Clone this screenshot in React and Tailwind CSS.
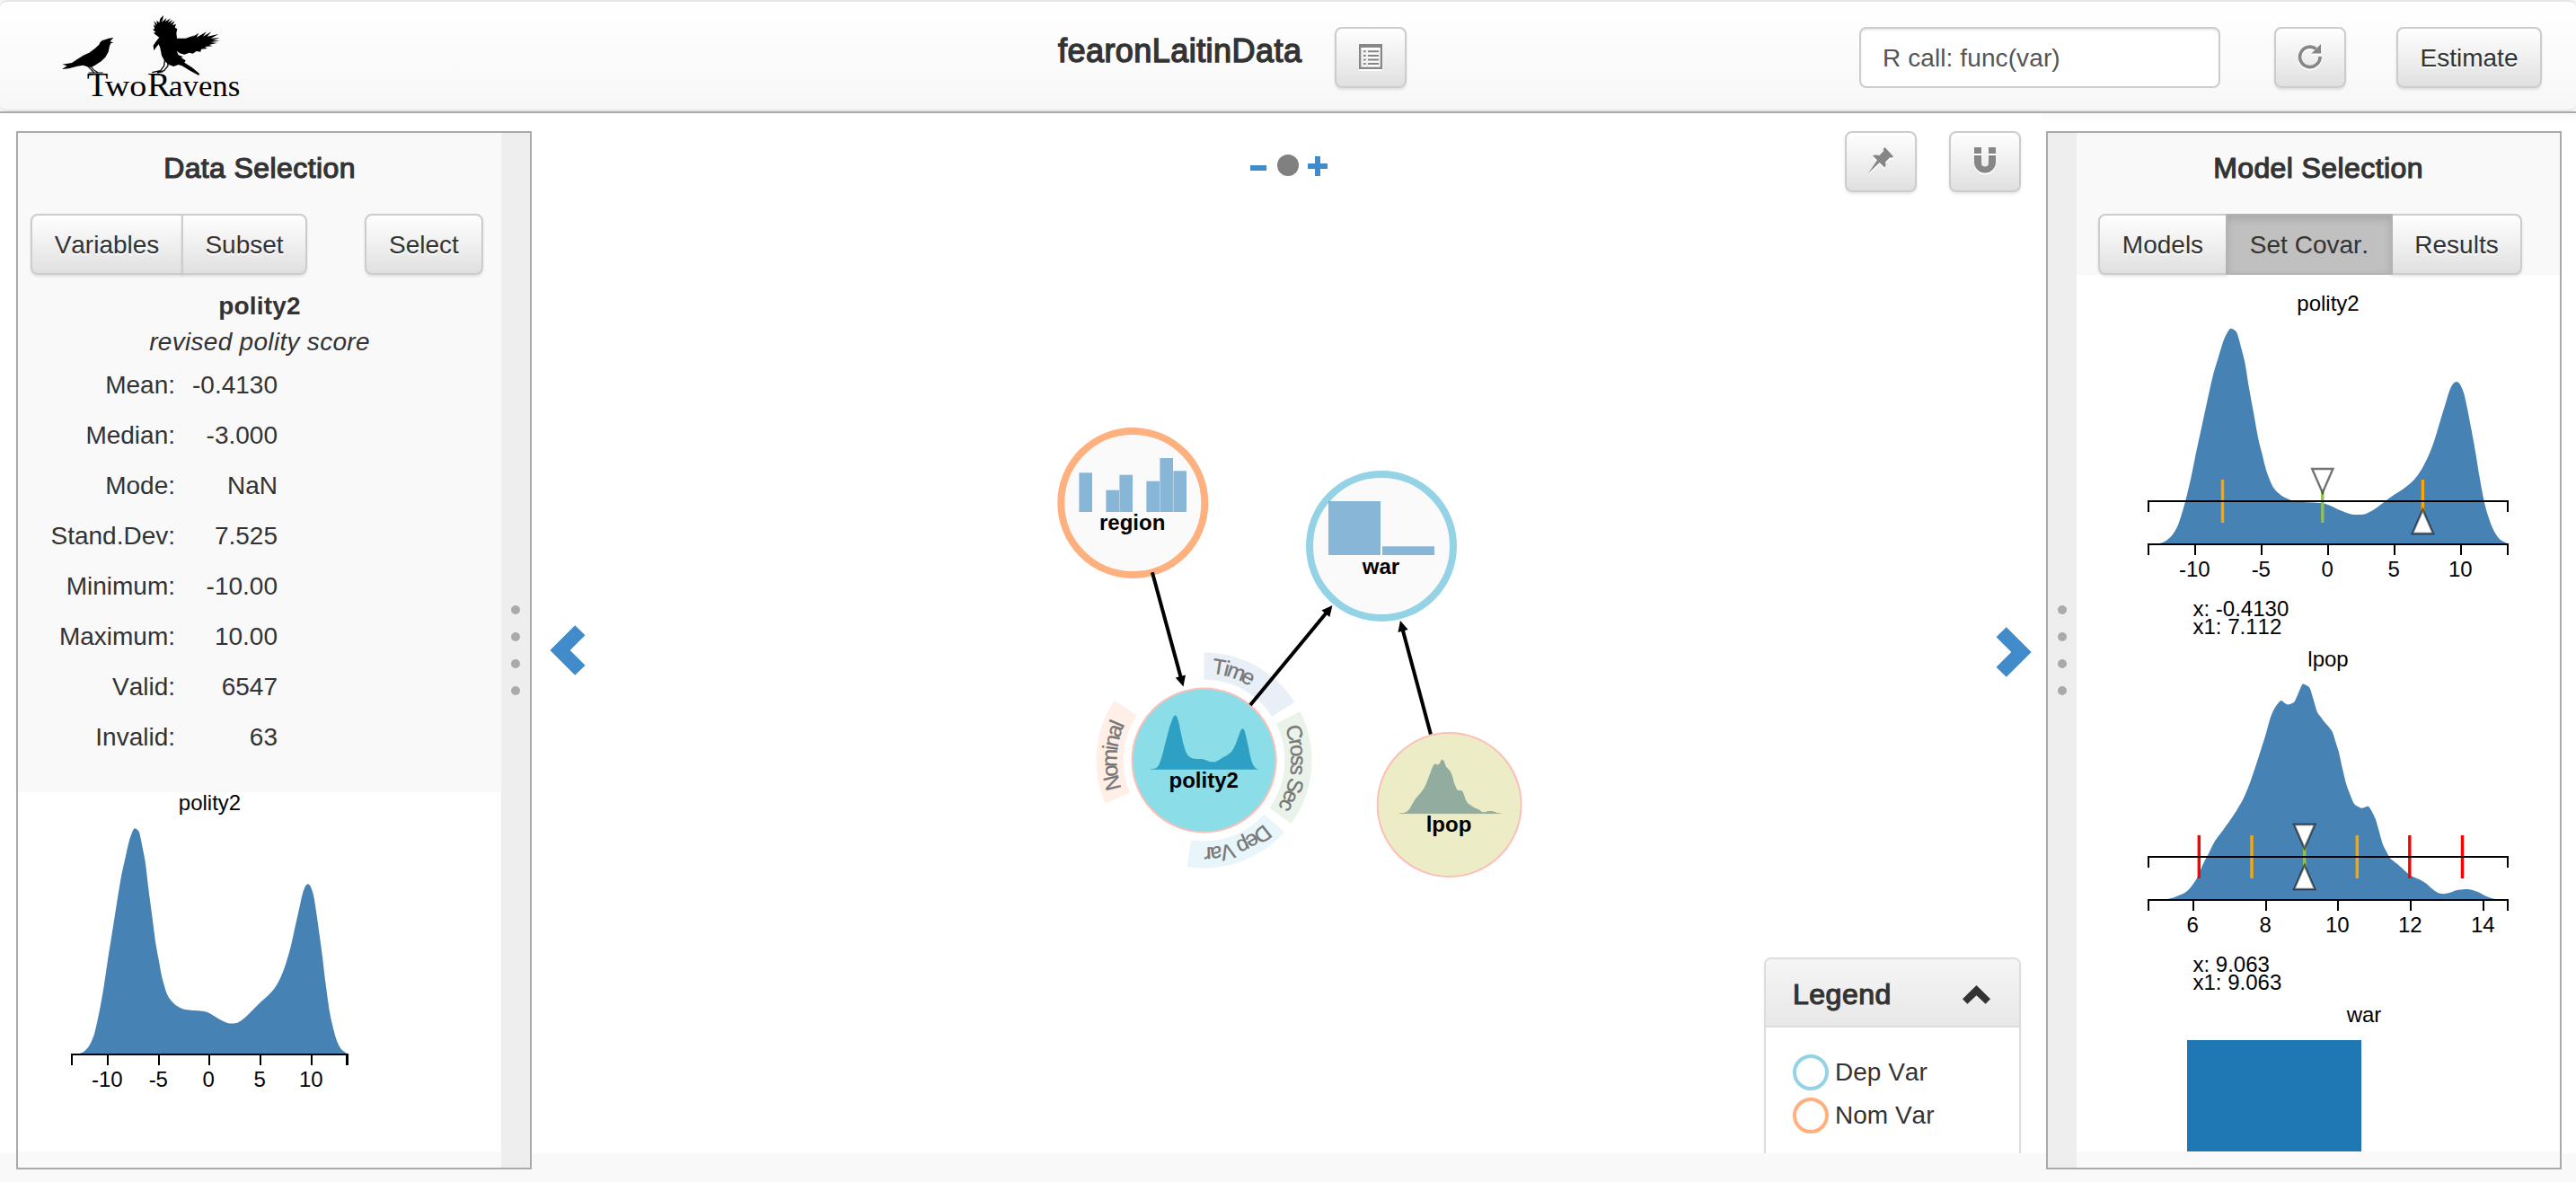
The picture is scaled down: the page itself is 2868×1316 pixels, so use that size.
import React from "react";

/* ---------- density data: [value, height relative to the peak] ---------- */

const fromSamples = (pts, zero, unit, base, height) =>
  pts.map(([x, y]) => [(x - zero) / unit, (base - y) / height]);

const POLITY = fromSamples(
  [
    [190, 938], [208, 937], [222, 930], [237, 908], [250, 868], [263, 795], [275, 710], [285, 625], [297, 530],
    [307, 450], [320, 350], [332, 280], [341, 230], [348, 203], [355, 186], [363, 190], [369, 202], [377, 250],
    [385, 305], [393, 390], [402, 475], [412, 570], [420, 625], [429, 685], [443, 742], [459, 769], [475, 783],
    [490, 790], [510, 793], [530, 794], [545, 797], [560, 806], [580, 822], [600, 834], [612, 836], [628, 834],
    [645, 820], [663, 798], [685, 770], [708, 744], [727, 717], [743, 680], [757, 633], [770, 575], [783, 500],
    [792, 450], [800, 405], [807, 380], [814, 371], [821, 378], [829, 408], [836, 460], [845, 540], [853, 615],
    [861, 700], [873, 805], [888, 883], [902, 921], [918, 937],
  ],
  553.5, 27, 938, 752
);

const LPOP = fromSamples(
  [
    [362, 767], [410, 766], [435, 760], [455, 752], [468, 744], [480, 732], [492, 715], [503, 695], [515, 665],
    [530, 637], [547, 603], [570, 572], [592, 541], [612, 510], [630, 478], [650, 428], [670, 368], [692, 298],
    [703, 258], [714, 230], [725, 213], [735, 204], [744, 210], [754, 215], [764, 212], [773, 206], [784, 182],
    [795, 158], [805, 160], [816, 169], [826, 200], [837, 236], [847, 250], [858, 265], [879, 291], [888, 318],
    [898, 350], [908, 395], [919, 440], [930, 470], [940, 494], [951, 503], [962, 508], [972, 506], [981, 503],
    [990, 515], [1002, 540], [1012, 575], [1022, 610], [1033, 632], [1043, 650], [1065, 668], [1085, 686],
    [1103, 700], [1125, 710], [1145, 722], [1163, 738], [1178, 748], [1192, 751], [1210, 748], [1230, 741],
    [1255, 738], [1275, 740], [1295, 747], [1315, 758], [1340, 766], [1373, 767],
  ],
  -127.4, 102.4, 767, 609
);

function densityPath(data, zero, unit, base, height) {
  const p = data.map(([v, h]) => [zero + v * unit, base - h * height]);
  const f = (n) => n.toFixed(2);
  let d = `M${f(p[0][0])},${f(base)}L${f(p[0][0])},${f(p[0][1])}`;
  for (let i = 0; i < p.length - 1; i++) {
    const a = p[i - 1] || p[i];
    const b = p[i];
    const c = p[i + 1];
    const e = p[i + 2] || c;
    const k = 1 / 7;
    d += `C${f(b[0] + (c[0] - a[0]) * k)},${f(b[1] + (c[1] - a[1]) * k)} ${f(c[0] - (e[0] - b[0]) * k)},${f(
      c[1] - (e[1] - b[1]) * k
    )} ${f(c[0])},${f(c[1])}`;
  }
  return d + `L${f(p[p.length - 1][0])},${f(base)}Z`;
}

/* ---------- shared controls ---------- */

const BTN =
  "flex h-[68px] items-center justify-center border-2 border-[#ccc] bg-gradient-to-b from-white to-[#e0e0e0] pt-px text-[28px] leading-10 text-[#333] [text-shadow:0_2px_0_#fff] shadow-[0_2px_3px_rgba(0,0,0,0.1)]";

const ICON = "[filter:drop-shadow(0_2px_0_#fff)]";

function Dots() {
  return (
    <div className="flex w-8 shrink-0 flex-col items-center justify-center gap-[20px] bg-[#eee]">
      {[0, 1, 2, 3].map((i) => (
        <span key={i} className="h-[10px] w-[10px] rounded-full bg-[#aaa]" />
      ))}
    </div>
  );
}

function Logo() {
  return (
    <svg className="ml-[60px] mt-[8px] h-[105px] w-[220px] shrink-0" viewBox="0 0 660 315">
      <path d="M199 96L183 98L170 103C160 104 154 110 151 119L138 131L118 146L98 155L78 168L60 180L28 185L44 190L27 201L50 199L78 191L98 188L112 193L124 195L136 189L158 175L172 161L182 143L186 124L190 115L199 112L187 109Z" />
      <g stroke="#000" fill="none">
        <path d="M122 190L132 203L148 213M112 190L124 202L134 213M116 213L164 213" strokeWidth="3.5" />
        <path d="M380 176L381 190L368 206L345 213M370 172L368 190L356 206L328 212M345 213L365 209" strokeWidth="4" />
      </g>
      <path d="M334 139L332 122L342 107L352 95L340 86L333 80L340 77L330 68L337 66L332 52L340 58L334 40L345 52L343 38L352 46L355 32L366 21L364 34L360 44L376 30L372 42L390 31L380 46L397 36L388 50L404 40L396 55L408 50L404 62L412 66L409 80L411 98L440 98L470 88L458 97L484 80L476 95L510 76L498 92L526 76L512 92L550 84L524 98L554 97L530 105L554 105L524 112L546 113L518 120L530 124L504 126L512 132L492 134L490 143L476 141L464 149L452 146L436 152L420 148L410 140L416 154L432 160L424 162L440 172L436 179L462 196L486 216L484 222L455 206L428 190L416 186L400 192L384 186L370 174L360 156L355 130L350 118L343 126Z" />
      <text y="291" fontFamily="'Liberation Serif', serif" fill="#000">
        <tspan x="110" fontSize="116">T</tspan>
        <tspan x="170" fontSize="100" textLength="140" lengthAdjust="spacingAndGlyphs">wo</tspan>
        <tspan x="312" fontSize="116">R</tspan>
        <tspan x="384" fontSize="100" textLength="238" lengthAdjust="spacingAndGlyphs">avens</tspan>
      </text>
    </svg>
  );
}

function Header() {
  return (
    <header className="h-[126px] border-b-2 border-[#aaa] bg-[#f4f4f4]">
      <div className="flex h-[124px] items-start rounded-lg border-y-2 border-[#e6e6e6] bg-gradient-to-b from-white to-[#f7f7f7]">
        <Logo />
        <h1 className="ml-[898px] mt-[35px] w-[308px] whitespace-nowrap text-[36px] leading-10 tracking-[0.45px] text-[#333] [-webkit-text-stroke:1.4px_#333]">
          fearonLaitinData
        </h1>
        <button className={`${BTN} mt-7 w-20 rounded-lg`}>
          <svg className={`${ICON} -mt-1 h-7 w-[26px]`} viewBox="0 0 26 28" fill="#868686">
            <path fillRule="evenodd" d="M0 0H26V28H0ZM2.3 4V25.7H23.8V4Z" />
            <path d="M5 7.3h2.7v2H5zM5 12h2.7v2H5zM5 16.5h2.7v2H5zM5 21h2.7v2H5zM10 7.3h12v2H10zM10 12h12v2H10zM10 16.5h12v2H10zM10 21h12v2H10z" />
          </svg>
        </button>
        <div className="ml-[504px] mt-7 flex h-[68px] w-[402px] items-center rounded-lg border-2 border-[#ccc] bg-white px-6 pt-px text-[28px] tracking-[0.1px] text-[#555] shadow-[inset_0_2px_2px_rgba(0,0,0,0.075)]">
          R call: func(var)
        </div>
        <button className={`${BTN} ml-[60px] mt-7 w-20 rounded-lg`}>
          <svg className={`${ICON} -mt-1 h-7 w-7`} viewBox="0 0 28 28">
            <path d="M25 14A11.2 11.2 0 1 1 20.5 5.4" fill="none" stroke="#868686" strokeWidth="3.6" />
            <path d="M26 0V10.5H15.5Z" fill="#868686" />
          </svg>
        </button>
        <button className={`${BTN} ml-14 mt-7 w-[162px] rounded-lg`}>Estimate</button>
      </div>
    </header>
  );
}

/* ---------- charts ---------- */

function Axis({ x1, x2, y, ticks = [] }) {
  return (
    <g>
      <path d={`M${x1},${y + 12}V${y}H${x2}V${y + 12}`} fill="none" stroke="#000" strokeWidth="2" />
      {ticks.map(([x, label]) => (
        <g key={label}>
          <path d={`M${x},${y}V${y + 12}`} stroke="#000" strokeWidth="2" />
          <text x={x - 0.7} y={y + 36} textAnchor="middle">{label}</text>
        </g>
      ))}
    </g>
  );
}

function Marker({ x, axis, up }) {
  const base = up ? axis + 36 : axis - 36;
  const tip = up ? axis + 9.5 : axis - 9.5;
  return (
    <path
      d={`M${x - 11.6},${base}H${x + 11.6}L${x},${tip}Z`}
      fill="#fff"
      stroke="#000"
      strokeOpacity="0.55"
      strokeWidth="2.4"
    />
  );
}

function CovariateChart({ name, data, zero, unit, ticks, marks, lower, upper, x, x1 }) {
  return (
    <svg
      className="h-[396px] w-[538px] shrink-0 overflow-visible font-['Liberation_Sans',sans-serif] text-[24px]"
      viewBox="2312 306 538 396"
    >
      <text x="2592" y="346" textAnchor="middle">{name}</text>
      <path d={densityPath(data, zero, unit, 605.5, 239.5)} fill="#4682b4" />
      {marks.map(([mx, color]) => (
        <path key={mx} d={`M${mx},534V582`} stroke={color} strokeWidth="3.4" />
      ))}
      <Axis x1={2392} x2={2792} y={606} ticks={ticks} />
      <Axis x1={2392} x2={2792} y={558} />
      <Marker x={upper} axis={558} />
      <Marker x={lower} axis={558} up />
      <text x="2441.5" y="686">{x}</text>
      <text x="2441.5" y="706">{x1}</text>
    </svg>
  );
}

/* ---------- left panel ---------- */

const STATS = [
  ["Mean:", "-0.4130"],
  ["Median:", "-3.000"],
  ["Mode:", "NaN"],
  ["Stand.Dev:", "7.525"],
  ["Minimum:", "-10.00"],
  ["Maximum:", "10.00"],
  ["Valid:", "6547"],
  ["Invalid:", "63"],
];

function PanelTitle({ children }) {
  return (
    <h2 className="mt-[19px] text-center text-[32px] leading-10 tracking-[0.4px] text-[#333] [-webkit-text-stroke:1.2px_#333]">
      {children}
    </h2>
  );
}

function LeftPanel() {
  return (
    <aside className="mt-5 ml-[18px] flex h-[1156px] w-[574px] shrink-0 border-2 border-[#aaa] bg-[#f9f9f9]">
      <div className="flex w-[538px] flex-col">
        <PanelTitle>Data Selection</PanelTitle>
        <div className="mt-[31px] flex pl-[14px]">
          <button className={`${BTN} w-[170px] rounded-l-lg`}>Variables</button>
          <button className={`${BTN} -ml-0.5 w-[140px] rounded-r-lg`}>Subset</button>
          <button className={`${BTN} ml-16 w-[132px] rounded-lg`}>Select</button>
        </div>
        <div className="mt-[15px] text-center text-[28px] leading-10 text-[#333]">
          <div className="font-bold tracking-[0.2px]">polity2</div>
          <div className="italic tracking-[0.3px]">revised polity score</div>
        </div>
        <dl className="grid auto-rows-[56px] grid-cols-[175px_114px] text-right text-[28px] leading-[56px] text-[#333]">
          {STATS.map(([label, value]) => (
            <React.Fragment key={label}>
              <dt>{label}</dt>
              <dd>{value}</dd>
            </React.Fragment>
          ))}
        </dl>
        <svg
          className="mt-[33px] h-[400px] w-[538px] overflow-visible bg-white font-['Liberation_Sans',sans-serif] text-[24px]"
          viewBox="20 882 538 400"
        >
          <text x="233.5" y="901.5" textAnchor="middle">polity2</text>
          <path d={densityPath(POLITY, 233, 11.364, 1173.5, 251)} fill="#4682b4" />
          <Axis
            x1={80}
            x2={387}
            y={1174}
            ticks={[[120, "-10"], [177, "-5"], [233, "0"], [290, "5"], [347, "10"]]}
          />
          <path d="M386,1173V1186" stroke="#000" strokeWidth="2" />
        </svg>
      </div>
      <Dots />
    </aside>
  );
}

/* ---------- graph canvas ---------- */

const CX = 1340.5;
const CY = 846.5;

function polar(r, a) {
  return [CX + r * Math.sin(a), CY - r * Math.cos(a)];
}

const ARCS = [
  { id: "time", from: 0, to: 1, fill: "#e8eff6", label: "Time" },
  { id: "cross", from: 1.1, to: 2.2, fill: "#e9f3ea", label: "Cross Sec" },
  { id: "dep", from: 2.3, to: 3.3, fill: "#e8f6fb", label: "Dep Var" },
  { id: "nominal", from: 4.3, to: 5.3, fill: "#ffefe6", label: "Nominal" },
];

function Arc({ id, from, to, fill, label }) {
  const [ox1, oy1] = polar(120, from);
  const [ox2, oy2] = polar(120, to);
  const [ix1, iy1] = polar(90, from);
  const [ix2, iy2] = polar(90, to);
  return (
    <g>
      <path d={`M${ox1},${oy1}A120,120 0 0 1 ${ox2},${oy2}L${ix2},${iy2}A90,90 0 0 0 ${ix1},${iy1}Z`} fill={fill} />
      <path id={`arc-${id}`} d={`M${ox1},${oy1}A120,120 0 0 1 ${ox2},${oy2}`} fill="none" />
      <text x="12" dy="23" fill="#777" stroke="#777" strokeWidth="0.3">
        <textPath href={`#arc-${id}`}>{label}</textPath>
      </text>
    </g>
  );
}

function Arrow({ from, to }) {
  const [x1, y1] = from;
  const [x2, y2] = to;
  const len = Math.hypot(x2 - x1, y2 - y1);
  const ux = (x2 - x1) / len;
  const uy = (y2 - y1) / len;
  const bx = x2 - ux * 12;
  const by = y2 - uy * 12;
  return (
    <g>
      <path d={`M${x1},${y1}L${bx + ux * 2},${by + uy * 2}`} stroke="#000" strokeWidth="4" />
      <path d={`M${x2},${y2}L${bx - uy * 5.8},${by + ux * 5.8}L${bx + uy * 5.8},${by - ux * 5.8}Z`} fill="#000" />
    </g>
  );
}

const REGION_BARS = [
  [1201.4, 526.3], [1231.4, 545.7], [1246.4, 528.7], [1276.4, 535.7], [1291.4, 510], [1306.4, 524.3],
];

function Graph() {
  return (
    <svg
      className="absolute left-0 top-0 h-[1158px] w-[1680px] font-['Liberation_Sans',sans-serif] text-[24px]"
      viewBox="592 126 1680 1158"
    >
      <rect x="1392" y="184" width="18" height="6" fill="#428bca" />
      <circle cx="1434" cy="184" r="12" fill="#808080" />
      <path d="M1464 174h6v8h8v6h-8v8h-6v-8h-8v-6h8z" fill="#428bca" />

      {ARCS.map((a) => (
        <Arc key={a.id} {...a} />
      ))}

      <circle cx="1261.3" cy="560" r="80" fill="#fafafa" stroke="#ffb07f" strokeWidth="8" />
      <circle cx="1538" cy="608" r="80" fill="#fafafa" stroke="#94d2e5" strokeWidth="8" />
      <circle cx={CX} cy={CY} r="80" fill="#8bdee8" stroke="#fcbfb8" strokeWidth="2" />
      <circle cx="1613.6" cy="896" r="80" fill="#ecedc6" stroke="#fcbfb8" strokeWidth="2" />

      <g fill="#1f77b4" fillOpacity="0.52">
        {REGION_BARS.map(([x, y]) => (
          <rect key={x} x={x} y={y} width="14.6" height={570 - y} />
        ))}
        <rect x="1479" y="558" width="58" height="60" />
        <rect x="1539" y="608.3" width="58" height="9.7" />
      </g>
      <path d={densityPath(POLITY, 1340.5, 4.44, 856.5, 60)} fill="#2ea0c3" />
      <path d={densityPath(LPOP.slice(1), 1496, 12.1, 905.8, 60)} fill="#92ada0" />
      <path d="M1281,856.3H1400" stroke="#2ea0c3" strokeOpacity="0.7" />
      <path d="M1558,905.6H1671" stroke="#92ada0" strokeOpacity="0.7" />

      <Arrow from={[1282.9, 637.3]} to={[1317.5, 764.5]} />
      <Arrow from={[1392, 785]} to={[1483.5, 674]} />
      <Arrow from={[1592.9, 817.5]} to={[1559, 691]} />

      <g fontWeight="bold" textAnchor="middle">
        <text x="1260.7" y="589.5">region</text>
        <text x="1537.5" y="639">war</text>
        <text x="1340.2" y="876.5">polity2</text>
        <text x="1613" y="925.7">lpop</text>
      </g>
    </svg>
  );
}

function Legend() {
  return (
    <div className="absolute left-[1372px] top-[940px] w-[286px] rounded-t-lg border-2 border-b-0 border-[#ddd] bg-white text-[#333] shadow-[0_1px_3px_rgba(0,0,0,0.06)]">
      <div className="flex h-[76px] items-center justify-between rounded-t-md border-b-2 border-[#ddd] bg-gradient-to-b from-[#f5f5f5] to-[#e8e8e8] pl-[30px] pr-8">
        <span className="mt-1 text-[32px] leading-10 tracking-[0.5px] [-webkit-text-stroke:1.2px_#333]">Legend</span>
        <svg className="mt-1 h-[21px] w-[31px]" viewBox="0 0 31 21">
          <path d="M15.5 0L31 15.2L25.6 20.8L15.5 11.3L5.4 20.8L0 15.2Z" fill="#333" />
        </svg>
      </div>
      <ul className="h-[150px] pl-[30px] pt-[26px] text-[28px] leading-10">
        <li className="flex h-12 items-center gap-[7px]">
          <span className="h-10 w-10 rounded-full border-4 border-[#94d2e5]" />
          Dep Var
        </li>
        <li className="flex h-12 items-center gap-[7px]">
          <span className="h-10 w-10 rounded-full border-4 border-[#ffb07f]" />
          Nom Var
        </li>
      </ul>
    </div>
  );
}

function Canvas() {
  return (
    <main className="relative h-[1158px] w-[1680px] shrink-0 overflow-hidden">
      <Graph />
      <div className="relative flex justify-end gap-9 pr-[22px] pt-5">
        <button className={`${BTN} w-20 rounded-lg`}>
          <svg className={`${ICON} -mt-1 h-[29px] w-7`} viewBox="0 0 28 29">
            <path
              d="M18.5 0L28 10.2L25.6 12L24.4 11L19 16.4C20 19 19.4 21 18.2 22.6L12.6 17L0 29L10 14.2L5 9.4C7 8.2 9.6 8 12.2 9.2L17.3 4L16.6 2Z"
              fill="#868686"
            />
          </svg>
        </button>
        <button className={`${BTN} w-20 rounded-lg`}>
          <svg className={`${ICON} -mt-1 h-[29px] w-6`} viewBox="0 0 24 29" fill="#868686">
            <path d="M0 0H8V7H0ZM16 0H24V7H16ZM0 9V16.5A12 12 0 0 0 24 16.5V9H16V17.5A4 4 0 0 1 8 17.5V9Z" />
          </svg>
        </button>
      </div>
      <svg className="absolute left-[20px] top-[570px] h-14 w-10" viewBox="0 0 40 56">
        <path d="M0.4 28L28.2 0.3L39.5 11.3L22.7 28L39.5 44.7L28.2 55.7Z" fill="#428bca" />
      </svg>
      <svg className="absolute left-[1630px] top-[572px] h-14 w-10" viewBox="0 0 40 56">
        <path d="M39.6 28L11.8 0.3L0.5 11.3L17.3 28L0.5 44.7L11.8 55.7Z" fill="#428bca" />
      </svg>
      <Legend />
    </main>
  );
}

/* ---------- right panel ---------- */

function RightPanel() {
  return (
    <div className="grow bg-[linear-gradient(#f8f8f8,#fff)] bg-[length:100%_10px] bg-no-repeat pl-[6px] pt-5">
      <aside className="flex h-[1156px] w-[574px] border-2 border-[#aaa] bg-[#f9f9f9]">
        <Dots />
        <div className="flex w-[538px] flex-col">
          <PanelTitle>Model Selection</PanelTitle>
          <div className="relative z-10 mt-[31px] flex pl-6">
            <button className={`${BTN} w-36 rounded-l-lg`}>Models</button>
            <button className="z-10 -ml-0.5 flex h-[68px] w-[186px] items-center justify-center border-2 border-[#b3b3b3] bg-[#c0c0c0] pt-px text-[28px] leading-10 text-[#333] shadow-[inset_0_4px_10px_rgba(0,0,0,0.13)]">
              Set Covar.
            </button>
            <button className={`${BTN} -ml-0.5 w-[146px] rounded-r-lg`}>Results</button>
          </div>
          <div className="flex h-[976px] flex-col overflow-hidden bg-white">
            <CovariateChart
              name="polity2"
              data={POLITY}
              zero={2591.8}
              unit={14.8}
              ticks={[[2444, "-10"], [2518, "-5"], [2592, "0"], [2666, "5"], [2740, "10"]]}
              marks={[[2474.5, "orange"], [2585.8, "#93c056"], [2697.4, "orange"]]}
              upper={2585.8}
              lower={2697.4}
              x="x: -0.4130"
              x1="x1: 7.112"
            />
            <CovariateChart
              name="lpop"
              data={LPOP}
              zero={2199.8}
              unit={40.36}
              ticks={[[2442, "6"], [2523, "8"], [2603, "10"], [2684, "12"], [2765, "14"]]}
              marks={[
                [2448.3, "red"],
                [2507, "orange"],
                [2565.7, "#93c056"],
                [2624.3, "orange"],
                [2682.8, "red"],
                [2741.5, "red"],
              ]}
              upper={2565.7}
              lower={2565.7}
              x="x: 9.063"
              x1="x1: 9.063"
            />
            <svg
              className="h-[184px] w-[538px] shrink-0 font-['Liberation_Sans',sans-serif] text-[24px]"
              viewBox="2312 1098 538 184"
            >
              <text x="2632" y="1138" textAnchor="middle">war</text>
              <rect x="2435" y="1158" width="194" height="124" fill="#1f77b4" />
            </svg>
          </div>
        </div>
      </aside>
    </div>
  );
}

export default function App() {
  return (
    <div className="h-[1316px] w-[2868px] overflow-hidden bg-[#f9f9f9] font-['Liberation_Sans',Arial,sans-serif] [font-kerning:none]">
      <Header />
      <div className="flex h-[1190px] bg-[linear-gradient(to_bottom,#fff_1158px,#f9f9f9_1158px)]">
        <LeftPanel />
        <Canvas />
        <RightPanel />
      </div>
    </div>
  );
}
